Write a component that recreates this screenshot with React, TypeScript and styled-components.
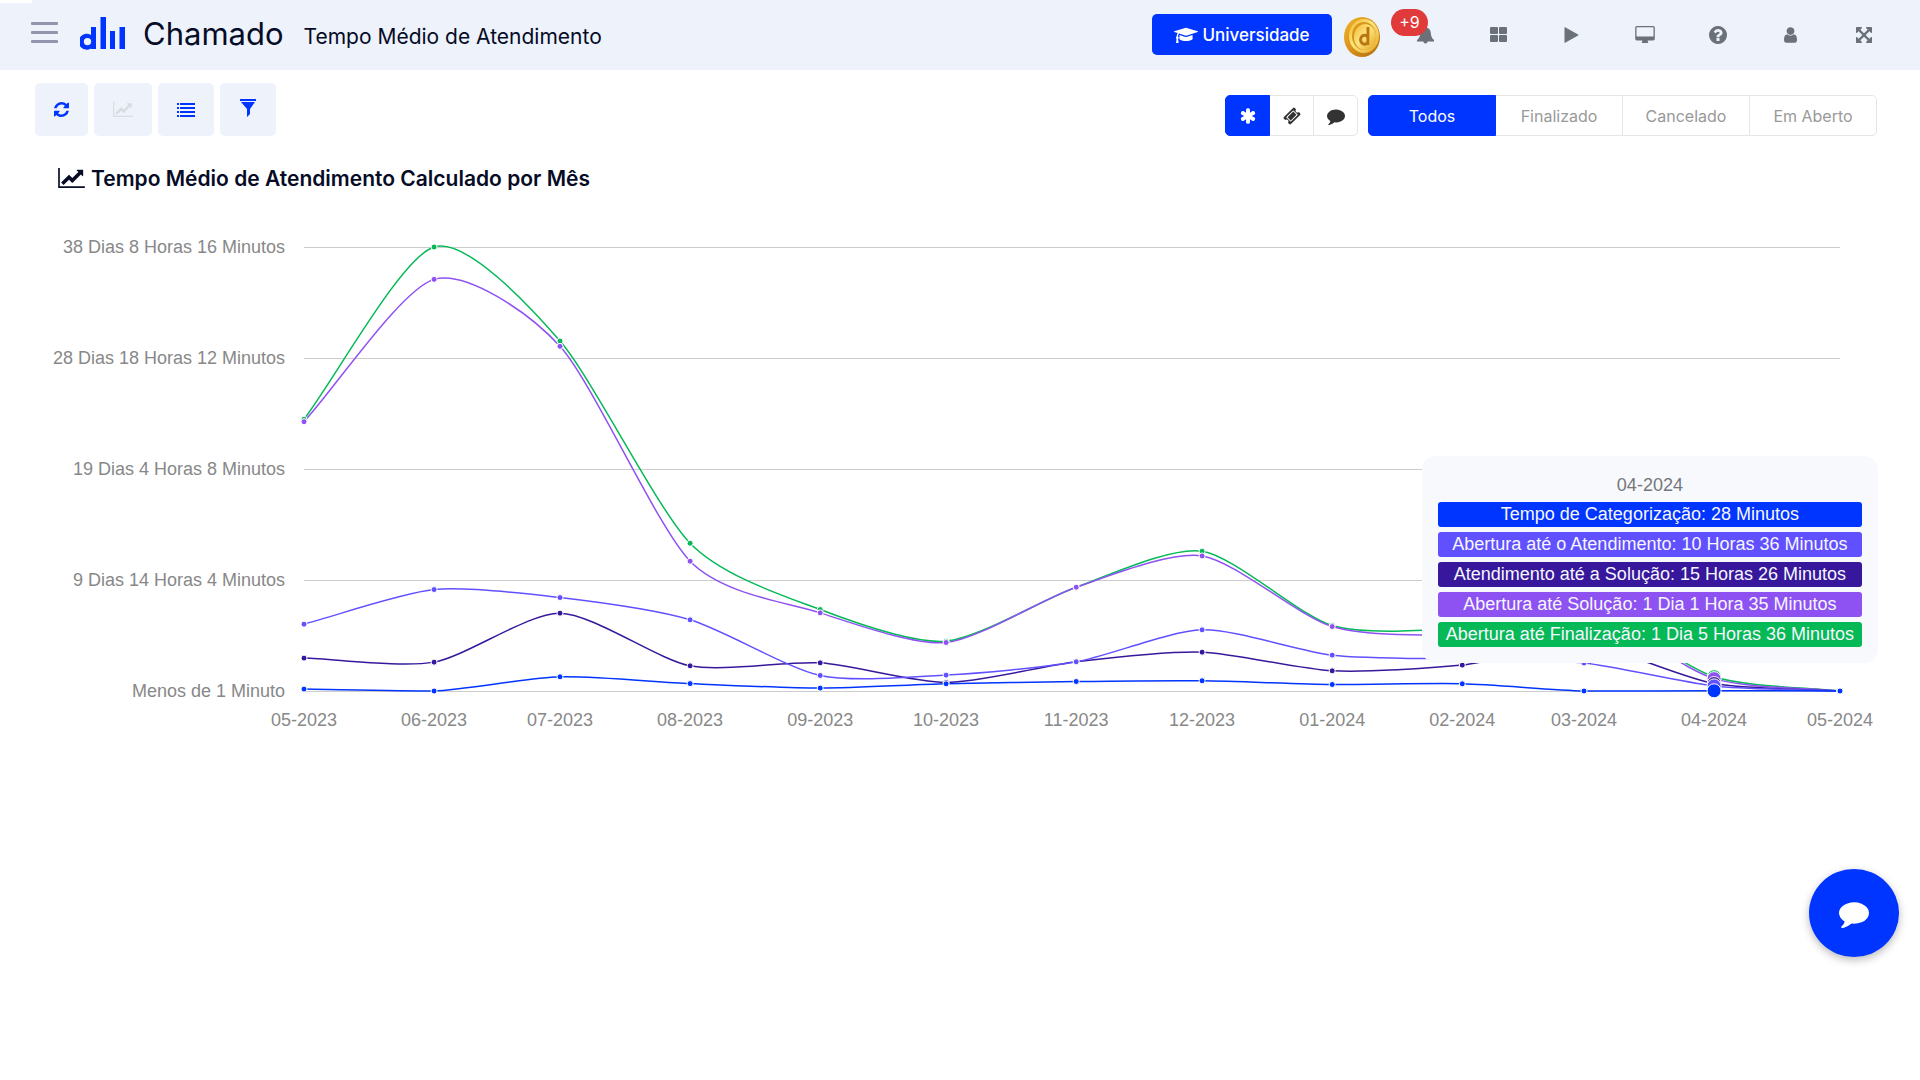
import React, { useLayoutEffect, useRef, useState } from 'react';
import styled, { createGlobalStyle } from 'styled-components';

const Global = createGlobalStyle`
  * { box-sizing: border-box; }
  body { margin: 0; background: #fff; font-family: Inter, 'Liberation Sans', sans-serif; color: #060b26; }
  button { font-family: inherit; cursor: pointer; }
`;

const Glyph = styled.svg<{ $w: number; $h: number }>`
  width: ${p => p.$w}px;
  height: ${p => p.$h}px;
  fill: currentColor;
  flex: none;
  display: block;
`;

const paths = {
  refresh: { box: '0 0 1536 1536', d: 'M1511 928q0 5-1 7-64 268-268 434.5t-478 166.5q-146 0-282.5-55t-243.5-157l-129 129q-19 19-45 19t-45-19-19-45v-448q0-26 19-45t45-19h448q26 0 45 19t19 45-19 45l-137 137q71 66 161 102t187 36q134 0 250-65t186-179q11-17 53-117 8-23 30-23h192q13 0 22.5 9.5t9.5 22.5zm25-800v448q0 26-19 45t-45 19h-448q-26 0-45-19t-19-45 19-45l138-138q-148-137-349-137-134 0-250 65t-186 179q-11 17-53 117-8 23-30 23h-199q-13 0-22.5-9.5t-9.5-22.5v-7q65-268 270-434.5t480-166.5q146 0 284 55.5t245 156.5l130-129q19-19 45-19t45 19 19 45z' },
  chart: { box: '0 128 2048 1536', d: 'M2048 1536v128h-2048v-1536h128v1408h1920zm-128-1248v435q0 21-19.5 29.5t-35.5-7.5l-121-121-633 633q-10 10-23 10t-23-10l-233-233-416 416-192-192 585-585q10-10 23-10t23 10l233 233 464-464-121-121q-16-16-7.5-35.5t29.5-19.5h435q14 0 23 9t9 23z' },
  list: { box: '0 0 18 14', d: 'M0 0h2v2h-2zM3 0h15v2h-15zM0 4h2v2h-2zM3 4h15v2h-15zM0 8h2v2h-2zM3 8h15v2h-15zM0 12h2v2h-2zM3 12h15v2h-15z' },
  filter: { box: '0 0 18 22', d: 'M1 0h16v2h-16zM2 3h14l-5 7v5l-3 3v-8z' },
  asterisk: { box: '0 0 1792 1792', d: 'M1546 1050q46 26 59.5 77.5t-12.5 97.5l-64 110q-26 46-77.5 59.5t-97.5-12.5l-266-153v307q0 52-38 90t-90 38h-128q-52 0-90-38t-38-90v-307l-266 153q-46 26-97.5 12.5t-77.5-59.5l-64-110q-26-46-12.5-97.5t59.5-77.5l266-154-266-154q-46-26-59.5-77.5t12.5-97.5l64-110q26-46 77.5-59.5t97.5 12.5l266 153v-307q0-52 38-90t90-38h128q52 0 90 38t38 90v307l266-153q46-26 97.5-12.5t77.5 59.5l64 110q26 46 12.5 97.5t-59.5 77.5l-266 154z' },
  ticket: { box: '0 0 1792 1792', d: 'M1024 452l316 316-572 572-316-316zm-211 979l618-618q19-19 19-45t-19-45l-362-362q-18-18-45-18t-45 18l-618 618q-19 19-19 45t19 45l362 362q18 18 45 18t45-18zm889-637l-907 908q-37 37-90.5 37t-90.5-37l-126-126q56-56 56-136t-56-136-136-56-136 56l-125-126q-37-37-37-90.5t37-90.5l907-906q37-37 90.5-37t90.5 37l125 125q-56 56-56 136t56 136 136 56 136-56l126 125q37 37 37 90.5t-37 90.5z' },
  comment: { box: '0 0 1792 1792', d: 'M1792 896q0 174-120 321.5t-326 233-450 85.5q-70 0-145-8-198 175-460 242-49 14-114 22-17 2-30.5-9t-17.5-29v-1q-3-4-.5-12t2-10 4.5-9.5l6-9 7-8.5 8-9q7-8 31-34.5t34.5-38 31-39.5 32.5-51 27-59 26-76q-157-89-247.5-220t-90.5-281q0-130 71-248.5t191-204.5 286-136.5 348-50.5q244 0 450 85.5t326 233 120 321.5z' },
  desktop: { box: '-64 0 1920 1664', d: 'M1728 992v-832q0-13-9.5-22.5t-22.5-9.5h-1600q-13 0-22.5 9.5t-9.5 22.5v832q0 13 9.5 22.5t22.5 9.5h1600q13 0 22.5-9.5t9.5-22.5zm128-832v1088q0 66-47 113t-113 47h-544q0 37 16 77.5t32 71 16 43.5q0 26-19 45t-45 19h-512q-26 0-45-19t-19-45q0-14 16-44t32-70 16-78h-544q-66 0-113-47t-47-113v-1088q0-66 47-113t113-47h1600q66 0 113 47t47 113z' },
  help: { box: '128 128 1536 1536', d: 'M1024 1376v-192q0-14-9-23t-23-9h-192q-14 0-23 9t-9 23v192q0 14 9 23t23 9h192q14 0 23-9t9-23zm256-672q0-88-55.5-163t-138.5-116-170-41q-243 0-371 213-15 24 8 42l132 100q7 6 19 6 16 0 25-12 53-68 86-92 34-24 86-24 48 0 85.5 26t37.5 59q0 38-20 61t-68 45q-63 28-115.5 86.5t-52.5 125.5v36q0 14 9 23t23 9h192q14 0 23-9t9-23q0-19 21.5-49.5t54.5-49.5q32-18 49-28.5t46-35 44.5-48 28-60.5 12.5-81zm384 192q0 209-103 385.5t-279.5 279.5-385.5 103-385.5-103-279.5-279.5-103-385.5 103-385.5 279.5-279.5 385.5-103 385.5 103 279.5 279.5 103 385.5z' },
  user: { box: '256 128 1280 1536', d: 'M1536 1399q0 109-62.5 187t-150.5 78h-854q-88 0-150.5-78t-62.5-187q0-85 8.5-160.5t31.5-152 58.5-131 94-89 134.5-34.5q131 128 313 128t313-128q76 0 134.5 34.5t94 89 58.5 131 31.5 152 8.5 160.5zm-256-887q0 159-112.5 271.5t-271.5 112.5-271.5-112.5-112.5-271.5 112.5-271.5 271.5-112.5 271.5 112.5 112.5 271.5z' },
  expand: { box: '128 128 1536 1536', d: 'M1411 541l-355 355 355 355 144-144q29-31 70-14 39 17 39 59v448q0 26-19 45t-45 19h-448q-42 0-59-40-17-39 14-69l144-144-355-355-355 355 144 144q31 30 14 69-17 40-59 40h-448q-26 0-45-19t-19-45v-448q0-42 40-59 39-17 69 14l144 144 355-355-355-355-144 144q-19 19-45 19-12 0-24-5-40-17-40-59v-448q0-26 19-45t45-19h448q42 0 59 40 17 39-14 69l-144 144 355 355 355-355-144-144q-31-30-14-69 17-40 59-40h448q26 0 45 19t19 45v448q0 42-39 59-13 5-25 5-26 0-45-19z' },
  grid: { box: '0 0 17 15', d: 'M1 0h6q1 0 1 1v5q0 1-1 1h-6q-1 0-1-1v-5q0-1 1-1zM10 0h6q1 0 1 1v5q0 1-1 1h-6q-1 0-1-1v-5q0-1 1-1zM1 8h6q1 0 1 1v5q0 1-1 1h-6q-1 0-1-1v-5q0-1 1-1zM10 8h6q1 0 1 1v5q0 1-1 1h-6q-1 0-1-1v-5q0-1 1-1z' },
  play: { box: '0 0 14 16', d: 'M0 .6v14.8q0 .6.6.3l13-7.2q.7-.5 0-1l-13-7.2q-.6-.3-.6.3z' },
  bell: { box: '0 0 17 18', d: 'M8.5 0q1 0 1 1v.6q4 .9 4.300 5.400.2 5 3.200 7v1.500h-17v-1.500q3-2 3.200-7 .3-4.500 4.300-5.400v-.6q0-1 1-1zM6.300 15.500h4.400q-.3 2-2.200 2t-2.200-2z' },
  cap: { box: '0 128 2304 1408', d: 'M1774 836l18 316q4 69-82 128t-235 93.500-323 34.500-323-34.500-235-93.500-82-128l18-316 574 181q22 7 48 7t48-7zm530-324q0 23-22 31l-1120 352q-4 1-10 1t-10-1l-652-206q-43 34-71 111.500t-34 178.500q63 36 63 109 0 69-58 107l58 433q2 14-8 25-9 11-24 11h-192q-15 0-24-11-10-11-8-25l58-433q-58-38-58-107 0-73 65-111 11-207 98-330l-333-104q-22-8-22-31t22-31l1120-352q4-1 10-1t10 1l1120 352q22 8 22 31z' },
};

function Icon({ name, w, h }: { name: keyof typeof paths; w: number; h: number }) {
  return <Glyph $w={w} $h={h} viewBox={paths[name].box} aria-hidden="true"><path d={paths[name].d} /></Glyph>;
}

const LoadBar = styled.div`
  position: absolute;
  top: 0;
  left: 0;
  width: 32px;
  height: 3px;
  background: #fff;
`;

const Header = styled.header`
  height: 70px;
  display: flex;
  align-items: center;
  background: #edf2fb;
  padding: 0 20px 1px 31px;
`;

const MenuButton = styled.button`
  width: 27px;
  height: 21px;
  margin-bottom: 4px;
  padding: 0;
  border: 0;
  background: none;
  display: flex;
  flex-direction: column;
  justify-content: space-between;
`;
const MenuLine = styled.span`
  height: 3px;
  border-radius: 1px;
  background: #9194ab;
`;

const Brand = styled.a`
  display: flex;
  align-items: center;
  margin: 0 0 3px 22px;
  gap: 18px;
  color: #060b26;
  text-decoration: none;
  font-size: 31px;
`;
const Subtitle = styled.h1`
  margin: 3px 0 0 20px;
  font-size: 21px;
  font-weight: 400;
  white-space: nowrap;
`;

const HeaderRight = styled.div`
  display: flex;
  align-items: center;
  margin-left: auto;
`;
const University = styled.button`
  height: 41px;
  width: 180px;
  display: flex;
  align-items: center;
  justify-content: center;
  gap: 4px;
  border: 0;
  border-radius: 5px;
  background: #0034ff;
  color: #fff;
  font-size: 17px;
  font-weight: 500;
`;
const Coin = styled.button`
  border: 0;
  padding: 0;
  background: none;
  margin: 4px 9px 0 12px;
`;
const IconNav = styled.nav`
  display: flex;
`;
const NavButton = styled.button`
  position: relative;
  width: 73px;
  height: 41px;
  border: 0;
  padding: 0;
  background: none;
  color: #6a7179;
  display: flex;
  align-items: center;
  justify-content: center;
`;
const Badge = styled.span`
  position: absolute;
  top: -5px;
  left: 2px;
  width: 37px;
  height: 27px;
  line-height: 27px;
  border-radius: 14px;
  background: #e03a3a;
  color: #fff;
  font-size: 16px;
  text-align: center;
`;

const Toolbar = styled.section`
  display: flex;
  justify-content: space-between;
  align-items: center;
  padding: 13px 43px 0 35px;
`;
const Tools = styled.div`
  display: flex;
  gap: 6px;
`;
const Tool = styled.button`
  height: 53px;
  padding: 0 19px;
  border: 0;
  border-radius: 5px;
  background: #edf2fb;
  color: #0034ff;
  display: flex;
  align-items: center;
  justify-content: center;
  &:disabled { color: #d9dde2; }
`;
const Filters = styled.div`
  display: flex;
  gap: 10px;
  margin-top: 12px;
`;
const Group = styled.div`
  display: flex;
`;
const Segment = styled.button<{ $active?: boolean; $wide?: boolean }>`
  width: ${p => (p.$wide ? 128 : 45)}px;
  height: 41px;
  padding: 0;
  display: flex;
  align-items: center;
  justify-content: center;
  border: 1px solid ${p => (p.$active ? '#0034ff' : '#e6e6e6')};
  margin-left: -1px;
  position: relative;
  z-index: ${p => (p.$active ? 1 : 0)};
  background: ${p => (p.$active ? '#0034ff' : '#fff')};
  color: ${p => (p.$active ? '#fff' : p.$wide ? '#999' : '#333')};
  font-size: 16px;
  &:first-child { border-radius: 5px 0 0 5px; margin-left: 0; }
  &:last-child { border-radius: 0 5px 5px 0; }
`;

const Title = styled.h2`
  display: flex;
  align-items: center;
  gap: 6px;
  margin: 28px 0 0 58px;
  height: 28px;
  font-size: 21px;
  font-weight: 600;
`;

const ChartArea = styled.section`
  position: relative;
  margin: 23px 0 0;
  font-family: 'Liberation Sans', Arial, sans-serif;
  font-size: 18px;
`;
const Plot = styled.svg`
  display: block;
  width: 100%;
  height: 530px;
`;
const AxisText = styled.text`
  fill: #888;
  font-size: 18px;
`;
const Tooltip = styled.div`
  position: absolute;
  top: 241px;
  right: 42px;
  padding: 17px 16px 16px;
  border-radius: 14px;
  background: #f8f9fd;
  display: grid;
  gap: 5px;
  text-align: center;
`;
const TipTitle = styled.div`
  height: 24px;
  line-height: 24px;
  color: #75777b;
`;
const TipRow = styled.div<{ $color: string }>`
  height: 25px;
  line-height: 25px;
  padding: 0 8px;
  border-radius: 3px;
  background: ${p => p.$color};
  color: #f6f7fd;
  white-space: nowrap;
`;

const Chat = styled.button`
  position: fixed;
  right: 21px;
  bottom: 123px;
  width: 90px;
  height: 88px;
  border: 0;
  border-radius: 50%;
  background: #0034ff;
  color: #fff;
  display: flex;
  align-items: center;
  justify-content: center;
  box-shadow: 0 3px 8px rgba(0, 0, 0, 0.28);
`;

const ticks = [
  { month: '05-2023', day: 0 }, { month: '06-2023', day: 31 }, { month: '07-2023', day: 61 },
  { month: '08-2023', day: 92 }, { month: '09-2023', day: 123 }, { month: '10-2023', day: 153 },
  { month: '11-2023', day: 184 }, { month: '12-2023', day: 214 }, { month: '01-2024', day: 245 },
  { month: '02-2024', day: 276 }, { month: '03-2024', day: 305 }, { month: '04-2024', day: 336 },
  { month: '05-2024', day: 366 },
];
const levels = ['38 Dias 8 Horas 16 Minutos', '28 Dias 18 Horas 12 Minutos', '19 Dias 4 Horas 8 Minutos', '9 Dias 14 Horas 4 Minutos', 'Menos de 1 Minuto'];

/* Durations in minutes, one value per month. */
const series = [
  { label: 'Tempo de Categorização: 28 Minutos', color: '#0034ff', values: [236, 0, 1765, 920, 360, 895, 1180, 1270, 810, 895, 0, 28, 0] },
  { label: 'Abertura até o Atendimento: 10 Horas 36 Minutos', color: '#6150ff', values: [8315, 12615, 11620, 8850, 1930, 1975, 3630, 7605, 4460, 3960, 3480, 636, 0] },
  { label: 'Atendimento até a Solução: 15 Horas 26 Minutos', color: '#37189c', values: [4090, 3590, 9680, 3130, 3500, 1060, 3630, 4830, 2510, 3220, 5740, 926, 0] },
  { label: 'Abertura até Solução: 1 Dia 1 Hora 35 Minutos', color: '#8f52f2', values: [33490, 51190, 42860, 16140, 9720, 6030, 12910, 16800, 8015, 7100, 9850, 1535, 0] },
  { label: 'Abertura até Finalização: 1 Dia 5 Horas 36 Minutos', color: '#05b957', values: [33790, 55216, 43520, 18380, 10130, 6200, 12910, 17390, 8140, 7850, 10350, 1776, 0] },
];

const LEFT = 304;
const RIGHT = 80;
const TOP = 32;
const BOTTOM = 476;
const MAX = 55216;
const HOVER = 11;

type Pt = { x: number; y: number };

function smooth(pts: Pt[]) {
  const grads = pts.map((p, i) => {
    const a = pts[i - 1] ?? p;
    const b = pts[i + 1] ?? p;
    return (b.y - a.y) / (b.x - a.x);
  });
  return pts.map((p, i) => {
    if (i === 0) return `M${p.x},${p.y}`;
    const q = pts[i - 1];
    const ix = (p.x - q.x) / 4;
    const y1 = Math.min(BOTTOM, q.y + ix * grads[i - 1]);
    const y2 = Math.min(BOTTOM, p.y - ix * grads[i]);
    return `C${q.x + ix},${y1},${p.x - ix},${y2},${p.x},${p.y}`;
  }).join('');
}

function Chart() {
  const ref = useRef<HTMLElement>(null);
  const [width, setWidth] = useState(1920);
  useLayoutEffect(() => {
    const el = ref.current;
    if (!el) return;
    const measure = () => setWidth(el.clientWidth);
    measure();
    const ro = new ResizeObserver(measure);
    ro.observe(el);
    return () => ro.disconnect();
  }, []);

  const xs = ticks.map(t => LEFT + (t.day / 366) * (width - LEFT - RIGHT));
  const lines = series.map(s => ({
    color: s.color,
    pts: s.values.map((v, i) => ({ x: xs[i], y: BOTTOM - (v / MAX) * (BOTTOM - TOP) })),
  })).reverse();

  return (
    <ChartArea ref={ref}>
      <Plot role="img" aria-label="Tempo Médio de Atendimento Calculado por Mês">
        {levels.map((label, i) => {
          const y = TOP + (i * (BOTTOM - TOP)) / 4;
          return (
            <g key={label}>
              <AxisText x={LEFT - 19} y={y + 6} textAnchor="end">{label}</AxisText>
              <path d={`M${LEFT},${y + 0.5}H${width - RIGHT}`} stroke="#ccc" />
            </g>
          );
        })}
        {ticks.map((t, i) => <AxisText key={t.month} x={xs[i]} y={BOTTOM + 35} textAnchor="middle">{t.month}</AxisText>)}
        {lines.map(l => <path key={l.color} d={smooth(l.pts)} fill="none" stroke={l.color} strokeWidth="1.5" />)}
        {lines.map(l => l.pts.map((p, i) => (
          <circle key={l.color + i} cx={p.x} cy={p.y} r={i === HOVER ? 7 : 3} fill={l.color} stroke="#fff" />
        )))}
      </Plot>
      <Tooltip role="tooltip">
        <TipTitle>04-2024</TipTitle>
        {series.map(s => <TipRow key={s.color} $color={s.color}>{s.label}</TipRow>)}
      </Tooltip>
    </ChartArea>
  );
}

export default function App() {
  return (
    <>
      <Global />
      <Header>
        <LoadBar />
        <MenuButton aria-label="Menu"><MenuLine /><MenuLine /><MenuLine /></MenuButton>
        <Brand href="#">
          <Glyph $w={45} $h={33} viewBox="0 0 45 33" aria-hidden="true">
            <g fill="#0034ff">
              <path fillRule="evenodd" d="M11 10h5v22h-5v-.6a8 8 0 1 1 0-13.500zM7.500 20.900a3.700 3.700 0 1 0 0 7.400a3.700 3.700 0 1 0 0-7.400z" />
              <path d="M20.500 0h5.500v32h-5.500zM30 14h5v18h-5zM39.500 10h5.500v22h-5.500z" />
            </g>
          </Glyph>
          Chamado
        </Brand>
        <Subtitle>Tempo Médio de Atendimento</Subtitle>
        <HeaderRight>
          <University><Icon name="cap" w={24} h={16} />Universidade</University>
          <Coin aria-label="Moedas">
            <Glyph $w={36} $h={40} viewBox="0 0 36 40">
              <defs>
                <linearGradient id="rim" x1="0" y1="0" x2="1" y2="1">
                  <stop offset="0" stopColor="#f0b52c" />
                  <stop offset="0.5" stopColor="#d8921a" />
                  <stop offset="1" stopColor="#b06a10" />
                </linearGradient>
                <linearGradient id="face" x1="0" y1="0" x2="1" y2="1">
                  <stop offset="0" stopColor="#f2b62c" />
                  <stop offset="0.45" stopColor="#fde581" />
                  <stop offset="1" stopColor="#e5a31f" />
                </linearGradient>
              </defs>
              <ellipse cx="18" cy="20" rx="18" ry="20" fill="url(#rim)" />
              <ellipse cx="20" cy="19" rx="15" ry="17" fill="url(#face)" />
              <ellipse cx="20" cy="19" rx="12" ry="14" fill="#d8961c" />
              <ellipse cx="21" cy="20" rx="11" ry="13" fill="url(#face)" />
              <path d="M24 10v18M24 20.500a4 4.500 0 1 0 0 4.500" fill="none" stroke="#b97612" strokeWidth="3" />
              <path d="M25.500 10v18" fill="none" stroke="#e8ae30" />
            </Glyph>
          </Coin>
          <IconNav>
            <NavButton aria-label="Notificações"><Icon name="bell" w={17} h={18} /><Badge>+9</Badge></NavButton>
            <NavButton aria-label="Painéis"><Icon name="grid" w={17} h={15} /></NavButton>
            <NavButton aria-label="Iniciar"><Icon name="play" w={15} h={16} /></NavButton>
            <NavButton aria-label="Monitor"><Icon name="desktop" w={20} h={17} /></NavButton>
            <NavButton aria-label="Ajuda"><Icon name="help" w={18} h={18} /></NavButton>
            <NavButton aria-label="Usuário"><Icon name="user" w={13} h={16} /></NavButton>
            <NavButton aria-label="Tela cheia"><Icon name="expand" w={16} h={16} /></NavButton>
          </IconNav>
        </HeaderRight>
      </Header>
      <main>
        <Toolbar>
          <Tools>
            <Tool aria-label="Atualizar"><Icon name="refresh" w={15} h={15} /></Tool>
            <Tool disabled aria-label="Gráfico"><Icon name="chart" w={20} h={15} /></Tool>
            <Tool aria-label="Lista"><Icon name="list" w={18} h={14} /></Tool>
            <Tool aria-label="Filtrar"><Icon name="filter" w={18} h={22} /></Tool>
          </Tools>
          <Filters>
            <Group>
              <Segment $active aria-label="Tudo"><Icon name="asterisk" w={18} h={18} /></Segment>
              <Segment aria-label="Chamados"><Icon name="ticket" w={18} h={18} /></Segment>
              <Segment aria-label="Conversas"><Icon name="comment" w={18} h={18} /></Segment>
            </Group>
            <Group>
              <Segment $wide $active>Todos</Segment>
              <Segment $wide>Finalizado</Segment>
              <Segment $wide>Cancelado</Segment>
              <Segment $wide>Em Aberto</Segment>
            </Group>
          </Filters>
        </Toolbar>
        <Title><Icon name="chart" w={27} h={20} />Tempo Médio de Atendimento Calculado por Mês</Title>
        <Chart />
      </main>
      <Chat aria-label="Abrir conversa"><Icon name="comment" w={30} h={30} /></Chat>
    </>
  );
}
